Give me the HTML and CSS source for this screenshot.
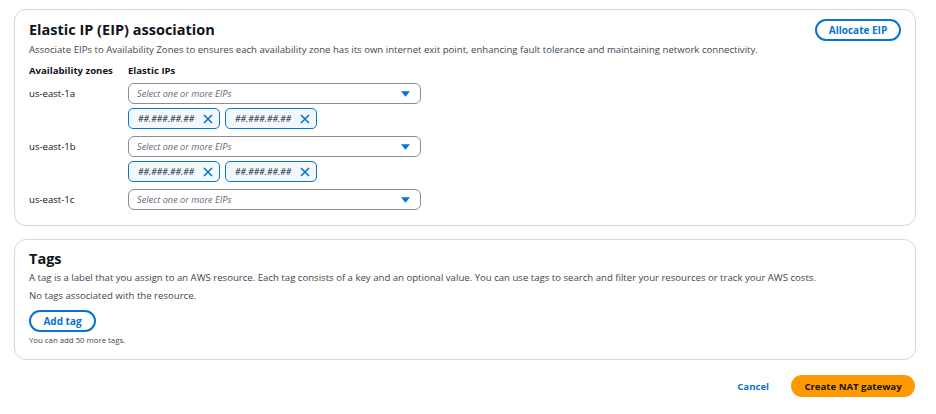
FILE: index.html
```html
<!DOCTYPE html>
<html>
<head>
<meta charset="utf-8">
<link rel="stylesheet" href="styles.css">
</head>
<body>
<div class="page">
  <section class="card eip">
    <div class="card-head">
      <h2 class="title">Elastic IP (EIP) association</h2>
      <button class="btn-outline">Allocate EIP</button>
    </div>
    <p class="desc">Associate EIPs to Availability Zones to ensures each availability zone has its own internet exit point, enhancing fault tolerance and maintaining network connectivity.</p>
    <div class="zones">
      <div class="col-label">Availability zones</div>
      <div class="col-label">Elastic IPs</div>

      <div class="zone">us-east-1a</div>
      <div class="field">
        <div class="select"><span>Select one or more EIPs</span><svg class="caret" viewBox="0 0 10 6"><path d="M0 0h10L5 6z"/></svg></div>
        <div class="tokens">
          <div class="token"><span>##.###.##.##</span><svg class="x" viewBox="0 0 10 10"><path d="M1 1l8 8M9 1l-8 8"/></svg></div>
          <div class="token"><span>##.###.##.##</span><svg class="x" viewBox="0 0 10 10"><path d="M1 1l8 8M9 1l-8 8"/></svg></div>
        </div>
      </div>

      <div class="zone">us-east-1b</div>
      <div class="field">
        <div class="select"><span>Select one or more EIPs</span><svg class="caret" viewBox="0 0 10 6"><path d="M0 0h10L5 6z"/></svg></div>
        <div class="tokens">
          <div class="token"><span>##.###.##.##</span><svg class="x" viewBox="0 0 10 10"><path d="M1 1l8 8M9 1l-8 8"/></svg></div>
          <div class="token"><span>##.###.##.##</span><svg class="x" viewBox="0 0 10 10"><path d="M1 1l8 8M9 1l-8 8"/></svg></div>
        </div>
      </div>

      <div class="zone">us-east-1c</div>
      <div class="field last">
        <div class="select"><span>Select one or more EIPs</span><svg class="caret" viewBox="0 0 10 6"><path d="M0 0h10L5 6z"/></svg></div>
      </div>
    </div>
  </section>

  <section class="card tags">
    <h2 class="title">Tags</h2>
    <p class="desc">A tag is a label that you assign to an AWS resource. Each tag consists of a key and an optional value. You can use tags to search and filter your resources or track your AWS costs.</p>
    <p class="desc empty">No tags associated with the resource.</p>
    <button class="btn-outline">Add tag</button>
    <p class="hint">You can add 50 more tags.</p>
  </section>

  <div class="actions">
    <button class="btn-link">Cancel</button>
    <button class="btn-primary">Create NAT gateway</button>
  </div>
</div>
</body>
</html>
```

FILE: styles.css
```css
* { box-sizing: border-box; }
html, body { margin: 0; background: #fff; }
body {
  font-family: "Open Sans", "Noto Sans", sans-serif;
  color: #16191f;
}
.page {
  padding: 9px 20px 0 14px;
  display: flex;
  flex-direction: column;
}
.card {
  border: 1px solid #d5d7db;
  border-radius: 12px;
  padding: 9px 14px 15px 14px;
}
.card-head {
  display: flex;
  justify-content: space-between;
  align-items: center;
}
.title {
  margin: 0;
  font-size: 14.5px;
  font-weight: 700;
  line-height: 20px;
  color: #0f141a;
}
.desc {
  margin: 2px 0 0;
  font-size: 9.6px;
  line-height: 14px;
  color: #414750;
}
.btn-outline {
  font-family: inherit;
  background: #fff;
  border: 2px solid #0972d3;
  color: #0972d3;
  border-radius: 20px;
  font-weight: 700;
  font-size: 10px;
  height: 22px;
  padding: 0;
  line-height: 18px;
  width: 86px;
  white-space: nowrap;
}
.zones {
  display: grid;
  grid-template-columns: 99px 293px;
  margin-top: 7px;
}
.col-label {
  font-size: 9.6px;
  font-weight: 700;
  line-height: 14px;
  color: #0f141a;
  margin-bottom: 5px;
}
.zone {
  font-size: 9.6px;
  line-height: 21px;
  color: #0f141a;
}
.field {
  display: flex;
  flex-direction: column;
  gap: 4px;
  margin-bottom: 7px;
}
.field.last { margin-bottom: 0; }
.select {
  height: 21px;
  border: 1px solid #8c8c94;
  border-radius: 6px;
  display: flex;
  align-items: center;
  justify-content: space-between;
  padding: 0 10px 0 8px;
  font-size: 9.2px;
  font-style: italic;
  color: #5f6b7a;
}
.caret { width: 9px; height: 6px; fill: #0972d3; }
.tokens { display: flex; gap: 5px; }
.token {
  width: 92px;
  height: 21px;
  border: 1.5px solid #0972d3;
  background: #f2f8fd;
  border-radius: 5px;
  display: flex;
  align-items: center;
  justify-content: space-between;
  padding: 0 6px 0 9px;
  font-size: 8.6px;
  font-style: italic;
  color: #0f141a;
}
.x { width: 10px; height: 10px; stroke: #0972d3; stroke-width: 1.6; fill: none; }
.tags {
  display: flex;
  flex-direction: column;
  margin-top: 13px;
  padding-top: 9px;
  padding-bottom: 13px;
}
.tags .desc { margin-top: 2px; }
.tags .desc.empty { margin-top: 4px; }
.tags .btn-outline { width: 67px; margin-top: 7px; align-self: flex-start; }
.hint {
  margin: 2px 0 0;
  font-size: 7.8px;
  line-height: 12px;
  color: #414750;
}
.actions {
  display: flex;
  justify-content: flex-end;
  align-items: center;
  gap: 22px;
  margin-top: 15px;
  padding-right: 1px;
}
.btn-link {
  font-family: inherit;
  background: none;
  border: 0;
  color: #0972d3;
  font-weight: 700;
  font-size: 9.6px;
  padding: 0;
}
.btn-primary {
  font-family: inherit;
  background: #ff9900;
  border: 0;
  border-radius: 20px;
  color: #0f141a;
  font-weight: 700;
  font-size: 9.6px;
  height: 22px;
  width: 124px;
  padding: 0;
}
```
